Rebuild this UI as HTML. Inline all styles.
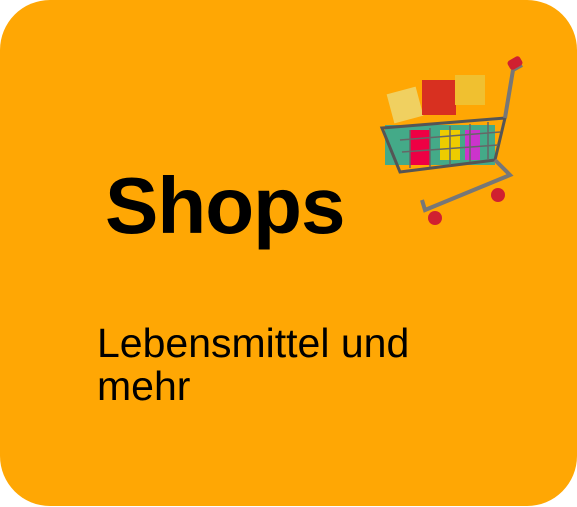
<!DOCTYPE html>
<html><head><style>
html,body{margin:0;padding:0;background:#fff;}
.card{position:absolute;left:0;top:0;width:577px;height:506px;background:#FFA704;border-radius:50px;overflow:hidden;}
.t{position:absolute;left:105px;top:160px;font:bold 80px "Liberation Sans",sans-serif;color:#000;letter-spacing:-1px;}
.s{position:absolute;left:97px;top:322px;font:41px/43px "Liberation Sans",sans-serif;color:#000;}
svg{position:absolute;left:370px;top:50px;}
</style></head><body>
<div class="card">
<div class="t">Shops</div>
<div class="s">Lebensmittel und<br>mehr</div>
<svg width="160" height="180" viewBox="0 0 160 180">
<rect x="20" y="40" width="30" height="30" fill="#f0d060" transform="rotate(-15 35 55)"/>
<rect x="52" y="30" width="34" height="35" fill="#d83020"/>
<rect x="85" y="25" width="30" height="30" fill="#f0c030"/>
<rect x="15" y="75" width="110" height="40" fill="#4a8"/>
<rect x="40" y="80" width="20" height="35" fill="#e04"/>
<rect x="70" y="80" width="20" height="30" fill="#ec0"/>
<rect x="95" y="80" width="15" height="30" fill="#c3c"/>
<path d="M12 78 L135 68 L125 110 L30 122 Z" fill="none" stroke="#555" stroke-width="3"/>
<path d="M30 90 L130 82 M32 102 L128 95 M40 80 V118 M60 78 V117 M80 76 V115 M100 74 V112 M118 72 V110" stroke="#666" stroke-width="1.5"/>
<path d="M135 68 L143 20 L152 15 M125 110 L140 125 L55 160 L52 150" fill="none" stroke="#777" stroke-width="4"/>
<rect x="138" y="8" width="14" height="10" rx="3" fill="#d02030" transform="rotate(-30 145 13)"/>
<circle cx="65" cy="168" r="7" fill="#d02030"/><circle cx="128" cy="145" r="7" fill="#d02030"/>
</svg>
</div>
</body></html>
